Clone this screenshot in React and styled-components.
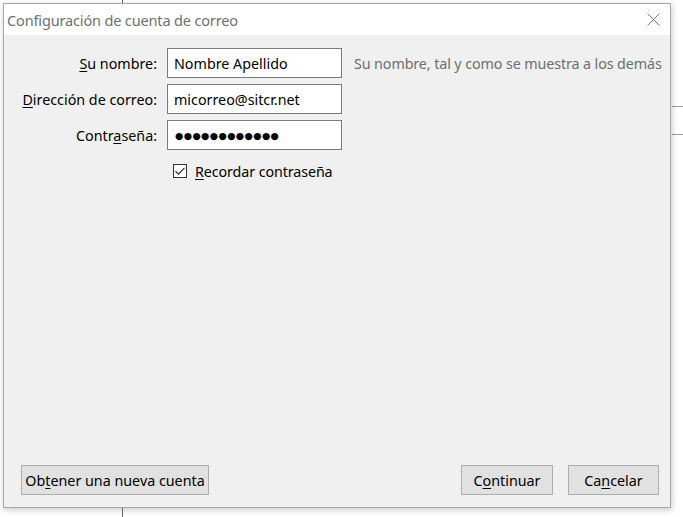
import React from "react";
import styled, { createGlobalStyle } from "styled-components";

const Global = createGlobalStyle`
  html, body { margin: 0; padding: 0; background: #ffffff; }
  body { font-family: "Noto Sans", "Open Sans", sans-serif; }
  * { box-sizing: border-box; }
`;

const Desktop = styled.div`
  position: relative;
  width: 683px;
  height: 517px;
  overflow: hidden;
  background: #ffffff;
  padding: 3px 0 0 3px;
`;

const BackLine = styled.div`
  position: absolute;
  left: 122px;
  top: 0;
  bottom: 0;
  width: 1px;
  background: #6a6a6a;
`;

const BackEdge = styled.div`
  position: absolute;
  left: 672px;
  top: ${(p) => p.$top}px;
  width: 11px;
  height: 1px;
  background: #9a9a9a;
`;

const Dialog = styled.div`
  position: relative;
  width: 668px;
  height: 505px;
  display: flex;
  flex-direction: column;
  background: #f0f0f0;
  border: 1px solid #a8a8a8;
  box-shadow: 1px 2px 6px rgba(0, 0, 0, 0.22);
`;

const TitleBar = styled.div`
  height: 31px;
  flex: none;
  display: flex;
  align-items: center;
  justify-content: space-between;
  background: #ffffff;
  padding: 0 7px 0 3px;
`;

const Title = styled.span`
  font-size: 14.5px;
  color: #6f6f6f;
  letter-spacing: -0.15px;
`;

const CloseBtn = styled.div`
  width: 20px;
  height: 20px;
  display: flex;
  align-items: center;
  justify-content: center;
`;

const Body = styled.div`
  flex: 1;
  display: flex;
  flex-direction: column;
  justify-content: space-between;
  padding: 13px 11px 12px 17px;
`;

const Form = styled.div`
  display: grid;
  grid-template-columns: 136px 175px auto;
  grid-auto-rows: 30px;
  column-gap: 10px;
  row-gap: 6px;
  align-items: center;
  font-size: 14.3px;
  color: #000;
`;

const Label = styled.label`
  grid-column: 1;
  text-align: right;
  white-space: nowrap;
`;

const Field = styled.div`
  grid-column: 2;
  height: 30px;
  display: flex;
  align-items: center;
  background: #ffffff;
  border: 1px solid #7a7a7a;
  padding: 0 6px;
  white-space: nowrap;
`;

const Dots = styled.span`
  font-family: "DejaVu Sans", sans-serif;
  font-size: 9.5px;
  letter-spacing: 0.4px;
  padding-left: 1px;
`;

const Hint = styled.span`
  grid-column: 3;
  color: #6d6d6d;
  white-space: nowrap;
  padding-left: 2px;
  letter-spacing: -0.1px;
`;

const CheckRow = styled.div`
  grid-column: 2 / span 2;
  height: 24px;
  display: flex;
  align-items: center;
  gap: 8px;
  padding-left: 6px;
  letter-spacing: -0.1px;
`;

const Box = styled.span`
  width: 14px;
  height: 14px;
  border: 1px solid #333333;
  background: #ffffff;
  display: flex;
  align-items: center;
  justify-content: center;
`;

const Footer = styled.div`
  display: flex;
  align-items: center;
  gap: 15px;
`;

const Button = styled.div`
  height: 30px;
  width: ${(p) => p.$w}px;
  display: flex;
  align-items: center;
  justify-content: center;
  background: #e1e1e1;
  border: 1px solid #adadad;
  font-size: 14.3px;
  color: #000;
  white-space: nowrap;
  margin-left: ${(p) => (p.$push ? "auto" : "0")};
`;

const U = styled.span`
  text-decoration: underline;
  text-underline-offset: 2px;
  text-decoration-thickness: 1px;
`;

export default function App() {
  return (
    <>
      <Global />
      <Desktop>
        <BackLine />
        <BackEdge $top={106} />
        <BackEdge $top={134} />
        <Dialog>
          <TitleBar>
            <Title>Configuración de cuenta de correo</Title>
            <CloseBtn>
              <svg width="13" height="13" viewBox="0 0 13 13">
                <path d="M0.5 0.5 L12.5 12.5 M12.5 0.5 L0.5 12.5" stroke="#767676" strokeWidth="1" fill="none" />
              </svg>
            </CloseBtn>
          </TitleBar>
          <Body>
            <Form>
              <Label><U>S</U>u nombre:</Label>
              <Field>Nombre Apellido</Field>
              <Hint>Su nombre, tal y como se muestra a los demás</Hint>
              <Label><U>D</U>irección de correo:</Label>
              <Field>micorreo@sitcr.net</Field>
              <span />
              <Label>Contr<U>a</U>seña:</Label>
              <Field><Dots>●●●●●●●●●●●●</Dots></Field>
              <span />
              <CheckRow>
                <Box>
                  <svg width="12" height="12" viewBox="0 0 12 12">
                    <path d="M1.5 6.2 L4.5 9.2 L10.5 2.8" stroke="#222" strokeWidth="1.1" fill="none" />
                  </svg>
                </Box>
                <span><U>R</U>ecordar contraseña</span>
              </CheckRow>
            </Form>
            <Footer>
              <Button $w={188}>Ob<U>t</U>ener una nueva cuenta</Button>
              <Button $w={92} $push>C<U>o</U>ntinuar</Button>
              <Button $w={91}>Ca<U>n</U>celar</Button>
            </Footer>
          </Body>
        </Dialog>
      </Desktop>
    </>
  );
}
